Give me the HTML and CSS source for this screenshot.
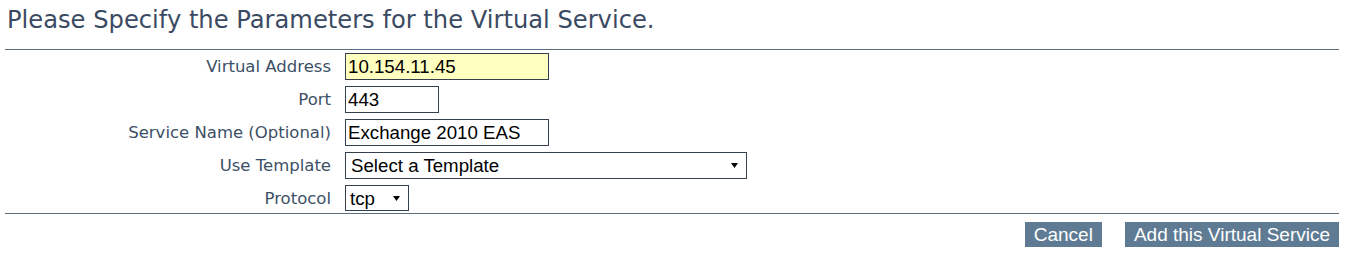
FILE: index.html
```html
<!DOCTYPE html>
<html>
<head>
<meta charset="utf-8">
<title>Virtual Service</title>
<link rel="stylesheet" href="styles.css">
</head>
<body>
<div class="page">
  <h1 class="title">Please Specify the Parameters for the Virtual Service.</h1>
  <form class="form">
    <label class="label" for="vaddr">Virtual Address</label>
    <div class="field"><input id="vaddr" class="input input-wide input-hl" type="text" value="10.154.11.45"></div>

    <label class="label" for="port">Port</label>
    <div class="field"><input id="port" class="input input-port" type="text" value="443"></div>

    <label class="label" for="sname">Service Name (Optional)</label>
    <div class="field"><input id="sname" class="input input-wide" type="text" value="Exchange 2010 EAS"></div>

    <label class="label" for="tmpl">Use Template</label>
    <div class="field">
      <div class="select-wrap select-template">
        <select id="tmpl" class="select"><option>Select a Template</option></select>
        <svg class="arrow" width="7" height="5" viewBox="0 0 7 5"><path d="M0 0H7L3.5 5Z" fill="#000"/></svg>
      </div>
    </div>

    <label class="label" for="proto">Protocol</label>
    <div class="field">
      <div class="select-wrap select-proto">
        <select id="proto" class="select"><option>tcp</option></select>
        <svg class="arrow" width="7" height="5" viewBox="0 0 7 5"><path d="M0 0H7L3.5 5Z" fill="#000"/></svg>
      </div>
    </div>
  </form>
  <div class="actions">
    <button class="btn" type="button">Cancel</button>
    <button class="btn" type="button">Add this Virtual Service</button>
  </div>
</div>
</body>
</html>
```

FILE: styles.css
```css
* { box-sizing: border-box; }

body {
  margin: 0;
  background: #fff;
}

.page {
  padding: 0 10px 0 5px;
}

.title {
  margin: 0;
  padding: 0 0 9px 2px;
  font-family: "DejaVu Sans", Verdana, sans-serif;
  font-size: 24.2px;
  font-weight: normal;
  line-height: 40px;
  color: #3b4a63;
  border-bottom: 1px solid #5a6f7f;
}

.form {
  display: grid;
  grid-template-columns: 326px 1fr;
  column-gap: 14px;
  row-gap: 6px;
  padding: 3px 0 2px;
  border-bottom: 1px solid #5a6f7f;
}

.label {
  justify-self: end;
  align-self: center;
  font-family: "DejaVu Sans", Verdana, sans-serif;
  font-size: 16.5px;
  color: #3d4f66;
}

.field {
  display: flex;
  align-items: center;
}

.input {
  height: 27px;
  margin: 0;
  padding: 0 2px;
  border: 1px solid #34404e;
  border-radius: 0;
  background: #fff;
  font-family: "Liberation Sans", Arial, sans-serif;
  font-size: 18.7px;
  color: #000;
  outline: none;
}

.input-wide { width: 204px; }
.input-port { width: 94px; }
.input-hl { background: #ffffc0; }

.select-wrap {
  position: relative;
  display: flex;
}

.select {
  -webkit-appearance: none;
  appearance: none;
  width: 100%;
  height: 27px;
  margin: 0;
  padding: 0 0 0 5px;
  border: 1px solid #34404e;
  border-radius: 0;
  background: #fff;
  font-family: "Liberation Sans", Arial, sans-serif;
  font-size: 18.7px;
  color: #000;
  outline: none;
}

.select-template { width: 402px; }
.select-proto { width: 64px; height: 26px; }
.select-proto .select { height: 26px; padding-left: 4px; }

.arrow {
  position: absolute;
  right: 9px;
  top: 11px;
  pointer-events: none;
}

.actions {
  display: flex;
  justify-content: flex-end;
  gap: 23px;
  margin-top: 8px;
}

.btn {
  height: 25px;
  margin: 0;
  padding: 0 9px;
  border: none;
  border-radius: 0;
  background: #5e7b93;
  color: #fff;
  font-family: "Liberation Sans", Arial, sans-serif;
  font-size: 19px;
  line-height: 25px;
  cursor: pointer;
}
```
